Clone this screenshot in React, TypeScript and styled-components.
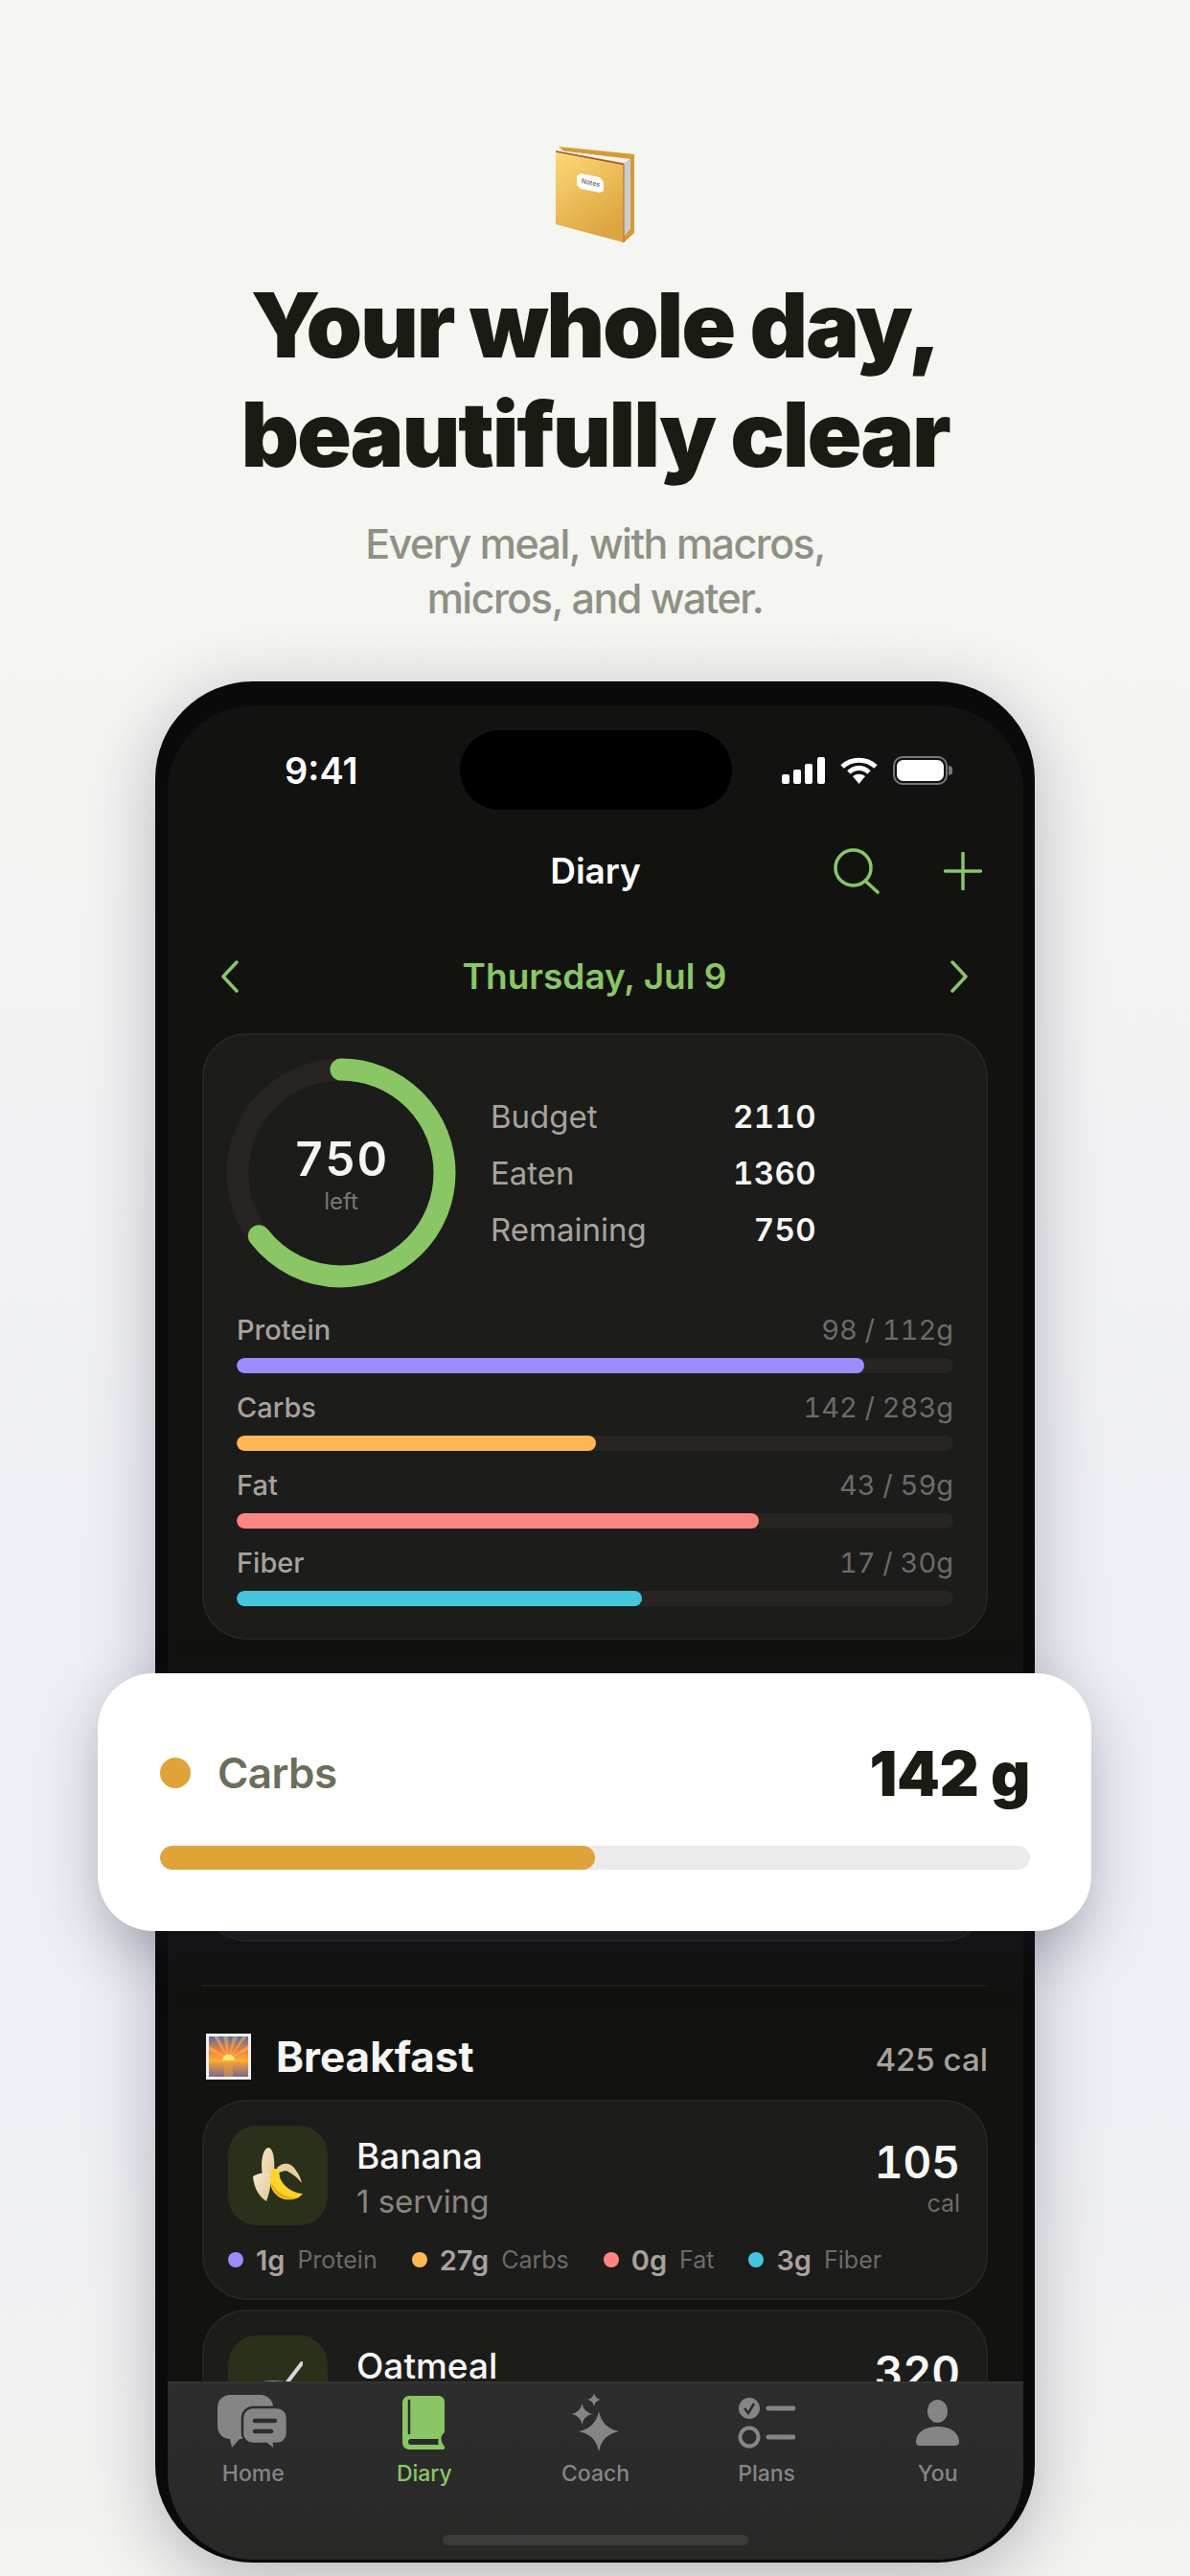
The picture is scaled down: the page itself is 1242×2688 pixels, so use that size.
import styled, { createGlobalStyle } from 'styled-components';

const GlobalStyle = createGlobalStyle`
  html, body {
    margin: 0;
    padding: 0;
  }
  body {
    width: 1242px;
    font-family: Inter, "Liberation Sans", sans-serif;
    -webkit-font-smoothing: antialiased;
  }
`;

const GREEN = '#8ac665';
const TAB_GRAY = '#858585';

const Page = styled.div`
  width: 1242px;
  height: 2688px;
  padding-top: 152px;
  box-sizing: border-box;
  overflow: hidden;
  display: flex;
  flex-direction: column;
  align-items: center;
  background: linear-gradient(180deg, #f5f5f1 0%, #f5f5f1 22%, #eeeff5 62%, #eeeff4 82%, #f3f3ef 100%);
`;

const HeroIcon = styled.svg`
  display: block;
  width: 83px;
  height: 102px;
`;

const Title = styled.h1`
  margin: 29px 0 0;
  font-size: 94px;
  line-height: 113.5px;
  font-weight: 900;
  letter-spacing: -2.2px;
  color: #1a1b12;
  text-align: center;
`;

const Subtitle = styled.p`
  margin: 29px 0 0;
  font-size: 43px;
  line-height: 57px;
  font-weight: 500;
  letter-spacing: -1.5px;
  color: #8e9084;
  text-align: center;
`;

const Phone = styled.div`
  position: relative;
  flex: none;
  margin-top: 58px;
  width: 918px;
  height: 1963px;
  padding: 25px 12px 3px 13px;
  box-sizing: border-box;
  background: #0a0a0a;
  border-radius: 102px;
  box-shadow: 0 16px 70px rgba(40, 42, 70, 0.3);
`;

const Screen = styled.div`
  position: relative;
  height: 100%;
  overflow: hidden;
  border-radius: 90px;
  background: #121210;
  color: #f5f5f2;
`;

const StatusBar = styled.div`
  display: grid;
  grid-template-columns: 1fr 284px 1fr;
  align-items: center;
  height: 83px;
  padding-top: 26px;
`;

const Time = styled.div`
  padding-left: 122px;
  font-size: 38px;
  line-height: 46px;
  font-weight: 600;
  color: #fff;
`;

const Island = styled.div`
  height: 83px;
  border-radius: 42px;
  background: #000;
`;

const StatusIcons = styled.div`
  display: flex;
  align-items: center;
  gap: 16px;
  padding-left: 52px;
`;

const NavRow = styled.div`
  display: grid;
  grid-template-columns: 1fr auto 1fr;
  align-items: center;
  height: 80px;
  margin-top: 24px;
`;

const NavTitle = styled.div`
  font-size: 37px;
  line-height: 46px;
  font-weight: 600;
  color: #fff;
`;

const NavActions = styled.div`
  display: flex;
  align-items: center;
  justify-content: flex-end;
  gap: 67px;
  padding-right: 43px;
`;

const DateRow = styled.div`
  display: flex;
  align-items: center;
  justify-content: space-between;
  height: 60px;
  margin-top: 40px;
  padding: 0 58px 0 56px;
`;

const DateLabel = styled.div`
  font-size: 37px;
  line-height: 44px;
  font-weight: 600;
  color: ${GREEN};
`;

const Surface = styled.div`
  box-sizing: border-box;
  margin: 0 37px 0 36px;
  background: #1c1c1b;
  border: 2px solid #242423;
  border-radius: 46px;
`;

const SummaryCard = styled(Surface)`
  margin-top: 29px;
  height: 633px;
  padding: 24px 34px 0;
`;

const TopRow = styled.div`
  display: flex;
  align-items: center;
  gap: 36px;
  margin-left: -11px;
`;

const Ring = styled.div`
  display: grid;
  place-items: center;
  width: 240px;
  height: 240px;
  flex: none;

  & > * {
    grid-area: 1 / 1;
  }
`;

const RingCenter = styled.div`
  padding-top: 3px;
  display: flex;
  flex-direction: column;
  align-items: center;
  gap: 4px;
`;

const RingValue = styled.div`
  font-size: 49px;
  line-height: 52px;
  font-weight: 600;
  letter-spacing: 1.2px;
  font-variant-numeric: tabular-nums;
  color: #f5f5f2;
`;

const RingLabel = styled.div`
  font-size: 24px;
  line-height: 28px;
  color: #7a7672;
`;

const Stats = styled.div`
  display: grid;
  grid-template-columns: 1fr auto;
  grid-auto-rows: 59px;
  align-items: center;
  width: 340px;
`;

const StatLabel = styled.div`
  font-size: 33px;
  color: #a8a29c;
`;

const StatValue = styled.div`
  font-size: 33px;
  font-weight: 600;
  letter-spacing: 0.4px;
  font-variant-numeric: tabular-nums;
  color: #f7f7f5;
  text-align: right;
`;

const MacroList = styled.div`
  margin-top: 26px;
  display: flex;
  flex-direction: column;
  gap: 18.5px;
`;

const MacroHead = styled.div`
  display: flex;
  justify-content: space-between;
  align-items: center;
  height: 34px;
  margin-bottom: 12.5px;
`;

const MacroName = styled.span`
  font-size: 29px;
  font-weight: 500;
  color: #a8a29c;
`;

const MacroAmount = styled.span`
  font-size: 29px;
  font-variant-numeric: tabular-nums;
  color: #6e6a66;
`;

const Track = styled.div`
  height: 16px;
  border-radius: 8px;
  background: #272422;
  overflow: hidden;
`;

const Fill = styled.div<{ $color: string }>`
  height: 100%;
  border-radius: 8px;
  background: ${(p) => p.$color};
`;

const WaterCard = styled(Surface)`
  margin-top: 40px;
  height: 275px;
`;

const Divider = styled.div`
  height: 2px;
  margin: 45px 37px 0 36px;
  background: #1e1e1c;
`;

const MealHeader = styled.div`
  display: flex;
  align-items: center;
  justify-content: space-between;
  height: 52px;
  margin: 47px 37px 0 40px;
`;

const MealTitle = styled.div`
  display: flex;
  align-items: center;
  gap: 26px;
  font-size: 44px;
  font-weight: 700;
  color: #f5f5f2;
`;

const MealCalories = styled.div`
  padding-top: 5px;
  font-size: 33px;
  font-weight: 500;
  color: #a8a29c;
`;

const FoodCard = styled(Surface)`
  padding: 25px 27px 0 25px;
  height: 209px;
  margin-top: 19px;

  & + & {
    margin-top: 10px;
  }
`;

const FoodTop = styled.div`
  display: flex;
  align-items: flex-start;
`;

const Tile = styled.div`
  flex: none;
  width: 104px;
  height: 104px;
  border-radius: 30px;
  background: #2a3019;
  display: flex;
  align-items: center;
  justify-content: center;
  margin-right: 30px;
`;

const FoodText = styled.div`
  flex: 1;
  padding-top: 10px;
`;

const FoodName = styled.div`
  font-size: 37px;
  line-height: 44px;
  font-weight: 500;
  color: #f7f7f5;
`;

const FoodServing = styled.div`
  margin-top: 3px;
  font-size: 33px;
  line-height: 44px;
  color: #8a8580;
`;

const FoodCalories = styled.div`
  padding-top: 12px;
  text-align: right;
`;

const CalorieValue = styled.div`
  font-size: 46px;
  line-height: 52px;
  font-weight: 600;
  font-variant-numeric: tabular-nums;
  color: #f7f7f5;
`;

const CalorieUnit = styled.div`
  margin-top: 2px;
  font-size: 25px;
  line-height: 30px;
  color: #6e6a66;
`;

const NutrientRow = styled.div`
  display: flex;
  align-items: center;
  gap: 36px;
  height: 34px;
  margin-top: 19px;
`;

const Nutrient = styled.div`
  display: flex;
  align-items: center;
`;

const Dot = styled.span<{ $color: string }>`
  width: 16px;
  height: 16px;
  border-radius: 50%;
  background: ${(p) => p.$color};
  margin-right: 13px;
`;

const NutrientValue = styled.span`
  font-size: 29px;
  font-weight: 600;
  color: #a8a29c;
  margin-right: 13px;
`;

const NutrientName = styled.span`
  font-size: 25px;
  color: #6e6a66;
`;

const TabBar = styled.div`
  position: absolute;
  left: 0;
  right: 0;
  bottom: 0;
  height: 186px;
  box-sizing: border-box;
  display: flex;
  flex-direction: column;
  justify-content: space-between;
  padding: 11px 0 15px;
  background: linear-gradient(180deg, #2c2d2c 0%, #282827 100%);
  border-top: 2px solid #333432;
`;

const Tabs = styled.div`
  display: grid;
  grid-template-columns: repeat(5, 1fr);
`;

const Tab = styled.div<{ $active?: boolean }>`
  display: flex;
  flex-direction: column;
  align-items: center;
  color: ${(p) => (p.$active ? GREEN : TAB_GRAY)};
`;

const TabIcon = styled.div`
  display: flex;
  align-items: center;
  justify-content: center;
  height: 60px;
`;

const TabLabel = styled.div`
  margin-top: 9px;
  font-size: 23px;
  line-height: 28px;
  font-weight: 500;
`;

const HomeIndicator = styled.div`
  align-self: center;
  width: 319px;
  height: 11px;
  border-radius: 6px;
  background: #3b3b3a;
`;

const FloatCard = styled.div`
  position: absolute;
  left: -60px;
  top: 1035px;
  width: 1037px;
  height: 269px;
  box-sizing: border-box;
  padding: 66px 64px 0 65px;
  background: #fff;
  border-radius: 58px;
  box-shadow: 0 22px 60px rgba(30, 32, 60, 0.28);
`;

const FloatHead = styled.div`
  display: flex;
  align-items: center;
  justify-content: space-between;
  height: 76px;
`;

const FloatLabel = styled.div`
  display: flex;
  align-items: center;
  gap: 28px;
  font-size: 44px;
  font-weight: 600;
  letter-spacing: -0.6px;
  color: #6b6e5c;
`;

const FloatDot = styled.span`
  width: 32px;
  height: 32px;
  border-radius: 50%;
  background: #e0a33a;
`;

const FloatValue = styled.div`
  font-size: 64px;
  font-weight: 900;
  letter-spacing: -0.4px;
  color: #1a1b12;
`;

const FloatTrack = styled.div`
  margin-top: 38px;
  height: 25px;
  border-radius: 13px;
  background: #ebebeb;
  overflow: hidden;
`;

const FloatFill = styled.div`
  height: 100%;
  border-radius: 13px;
  background: #e0a33a;
`;

const macros = [
  { name: 'Protein', amount: '98 / 112g', pct: 87.5, color: '#9b8cff' },
  { name: 'Carbs', amount: '142 / 283g', pct: 50.1, color: '#ffb755' },
  { name: 'Fat', amount: '43 / 59g', pct: 72.9, color: '#ff8585' },
  { name: 'Fiber', amount: '17 / 30g', pct: 56.6, color: '#45c6dd' },
];

const bananaNutrients = [
  { value: '1g', name: 'Protein', color: '#9b8cff' },
  { value: '27g', name: 'Carbs', color: '#ffb755' },
  { value: '0g', name: 'Fat', color: '#ff8585' },
  { value: '3g', name: 'Fiber', color: '#45c6dd' },
];

const NotebookEmoji = () => (
  <HeroIcon viewBox="0 0 83 102">
    <defs>
      <linearGradient id="cover" x1="0" y1="0" x2="0.5" y2="1">
        <stop offset="0" stopColor="#fdd878" />
        <stop offset="1" stopColor="#dca53f" />
      </linearGradient>
    </defs>
    <path d="M3 1 L82 9 L82 91 L71 101 L60 50 Z" fill="#d79a35" />
    <path d="M3 5 L78 14 L78 87 L71 95 L71 18 Z" fill="#c9ccd0" />
    <path d="M3 5 L78 14 L71 18 L3 6 Z" fill="#f1f1ee" />
    <path d="M0 6 L71 20 L71 101 L0 82 Z" fill="url(#cover)" />
    <path d="M0 6 L71 19.5" stroke="#a8562a" strokeWidth="1.4" fill="none" />
    <path d="M71 20 V101" stroke="#b9762c" strokeWidth="1.2" />
    <path
      d="M26 29 L46 33 L50 38 L50 47 L46 49 L26 45 L22 41 L22 32 Z"
      fill="#fff"
    />
    <text
      x="36"
      y="41"
      fontSize="7"
      fontWeight="600"
      fill="#77777a"
      textAnchor="middle"
      transform="rotate(11 36 41)"
    >
      Notes
    </text>
  </HeroIcon>
);

const SunriseEmoji = () => (
  <svg width="47" height="48" viewBox="0 0 47 48">
    <defs>
      <linearGradient id="sky" x1="0" y1="0" x2="0" y2="1">
        <stop offset="0" stopColor="#5f6a9c" />
        <stop offset="0.35" stopColor="#f0803c" />
        <stop offset="0.62" stopColor="#fbb034" />
        <stop offset="0.66" stopColor="#ea9a3c" />
        <stop offset="1" stopColor="#7c6a8c" />
      </linearGradient>
    </defs>
    <rect width="47" height="48" fill="#eef0f4" />
    <rect x="3" y="3" width="41" height="42" fill="url(#sky)" />
    <path
      d="M23.5 27 L8 3 H13 Z M23.5 27 L18 3 H23 Z M23.5 27 L28 3 H33 Z M23.5 27 L38 3 H43 Z M23.5 27 L3 12 V17 Z M23.5 27 L44 12 V17 Z"
      fill="#ffd25e"
      opacity="0.4"
    />
    <path d="M17 28 A6.5 6.5 0 0 1 30 28 Z" fill="#ffe873" />
    <rect x="19" y="29" width="9" height="16" fill="#f2a33c" opacity="0.45" />
  </svg>
);

const BananaEmoji = () => (
  <svg width="52" height="58" viewBox="0 0 52 58">
    <defs>
      <linearGradient id="peel" x1="0" y1="0" x2="1" y2="1">
        <stop offset="0" stopColor="#f6e8ce" />
        <stop offset="1" stopColor="#e2c996" />
      </linearGradient>
    </defs>
    <path d="M16 0 C22 1 23 14 22 30 L10 30 C8 18 9 2 16 0 Z" fill="url(#peel)" />
    <path d="M0 30 C6 26 12 26 18 27 C20 36 17 48 14 56 C6 51 1 42 0 30 Z" fill="url(#peel)" />
    <path d="M25 21 C32 14 41 16 45 24 C48 28 50 32 51 37 C45 30 40 26 34 24 L27 26 Z" fill="#e7cf9f" />
    <path d="M21 22 C16 30 16 45 28 52 C35 56 47 55 52 48 C44 48 32 42 28 31 L27 22 Z" fill="#fdd42a" />
    <path d="M19 36 C20 44 24 49 31 52 C36 54 42 54 47 52 C38 53 26 50 19 36 Z" fill="#e8a80f" />
  </svg>
);

const OatmealEmoji = () => (
  <svg width="52" height="58" viewBox="0 0 52 58">
    <path d="M51 6 L35 27" stroke="#d9d5d8" strokeWidth="4" strokeLinecap="round" />
    <ellipse cx="22" cy="32" rx="22" ry="8" fill="#6d8fb0" />
    <path d="M0 32 C2 50 12 56 22 56 C32 56 42 50 44 32 Z" fill="#4c77a5" />
  </svg>
);

const HomeIcon = () => (
  <svg width="74" height="59" viewBox="0 0 74 59" fill={TAB_GRAY}>
    <path d="M13 0 H45 A13 13 0 0 1 58 13 V33 A13 13 0 0 1 45 46 H23 L15 55 L13 46 A13 13 0 0 1 0 33 V13 A13 13 0 0 1 13 0 Z" />
    <path
      d="M37 13 H62 A11 11 0 0 1 73 24 V40 A11 11 0 0 1 62 51 H59 L60 58 L51 51 H37 A11 11 0 0 1 26 40 V24 A11 11 0 0 1 37 13 Z"
      stroke="#2b2c2b"
      strokeWidth="2.5"
    />
    <path d="M39 27 H60 M39 38 H56" stroke="#2b2c2b" strokeWidth="4.5" strokeLinecap="round" fill="none" />
  </svg>
);

const DiaryIcon = () => (
  <svg width="45" height="56" viewBox="0 0 45 56">
    <path
      d="M7 0 H38 A6 6 0 0 1 44 6 V36 A4 4 0 0 1 42 40 C40 43 40 47 42 50 L44 53 A2 2 0 0 1 42 56 H7 A7 7 0 0 1 0 49 V7 A7 7 0 0 1 7 0 Z"
      fill={GREEN}
    />
    <path d="M7 5 V39" stroke="#2b2c2b" strokeWidth="2.5" strokeLinecap="round" />
    <path d="M9 45 H38 C37 47 37 49 38 51 H9 A3 3 0 0 1 9 45 Z" fill="#2b2c2b" />
  </svg>
);

const star = (cx: number, cy: number, rx: number, ry: number) =>
  `M${cx} ${cy - ry} Q${cx + rx * 0.16} ${cy - ry * 0.16} ${cx + rx} ${cy} Q${cx + rx * 0.16} ${cy + ry * 0.16} ${cx} ${cy + ry} Q${cx - rx * 0.16} ${cy + ry * 0.16} ${cx - rx} ${cy} Q${cx - rx * 0.16} ${cy - ry * 0.16} ${cx} ${cy - ry} Z`;

const CoachIcon = () => (
  <svg width="50" height="60" viewBox="0 0 50 60" fill={TAB_GRAY}>
    <path d={star(29, 39, 21, 21)} />
    <path d={star(11.5, 21, 11, 11)} />
    <path d={star(24, 6, 7, 7)} />
  </svg>
);

const PlansIcon = () => (
  <svg width="60" height="54" viewBox="0 0 60 54">
    <circle cx="12" cy="12" r="11" fill={TAB_GRAY} />
    <path d="M7 12 L11 17 L17 7" stroke="#2b2c2b" strokeWidth="2.5" fill="none" />
    <path d="M32 12 H58 M32 42 H58" stroke={TAB_GRAY} strokeWidth="5" strokeLinecap="round" />
    <circle cx="12" cy="42" r="9.5" fill="none" stroke={TAB_GRAY} strokeWidth="4" />
  </svg>
);

const YouIcon = () => (
  <svg width="45" height="48" viewBox="0 0 45 48" fill={TAB_GRAY}>
    <ellipse cx="22.5" cy="12" rx="10.5" ry="12" />
    <path d="M0 44 C0 34 10 28 22.5 28 C35 28 45 34 45 44 A4 4 0 0 1 41 48 H4 A4 4 0 0 1 0 44 Z" />
  </svg>
);

const tabs = [
  { label: 'Home', icon: <HomeIcon /> },
  { label: 'Diary', icon: <DiaryIcon />, active: true },
  { label: 'Coach', icon: <CoachIcon /> },
  { label: 'Plans', icon: <PlansIcon /> },
  { label: 'You', icon: <YouIcon /> },
];

export default function App() {
  const radius = 108;
  const circumference = 2 * Math.PI * radius;

  return (
    <Page>
      <GlobalStyle />
      <NotebookEmoji />
      <Title>
        Your whole day,
        <br />
        beautifully clear
      </Title>
      <Subtitle>
        Every meal, with macros,
        <br />
        micros, and water.
      </Subtitle>

      <Phone>
        <Screen>
          <StatusBar>
            <Time>9:41</Time>
            <Island />
            <StatusIcons>
              <svg width="45" height="28" viewBox="0 0 45 28" fill="#fff">
                <rect x="0" y="18" width="8" height="10" rx="2" />
                <rect x="12" y="13" width="8" height="15" rx="2" />
                <rect x="24" y="7" width="8" height="21" rx="2" />
                <rect x="37" y="0" width="8" height="28" rx="2" />
              </svg>
              <svg width="39" height="28" viewBox="0 0 39 28" fill="none" stroke="#fff">
                <path d="M2 10 C12 1 27 1 37 10" strokeWidth="5" />
                <path d="M9 16 C15 10 24 10 30 16" strokeWidth="5" />
                <path d="M19.5 28 L13 20 C17 17 22 17 26 20 Z" fill="#fff" stroke="none" />
              </svg>
              <svg width="62" height="30" viewBox="0 0 62 30">
                <rect x="1" y="1" width="55" height="28" rx="9" fill="none" stroke="#77777a" strokeWidth="2" />
                <rect x="4" y="4" width="49" height="22" rx="6.5" fill="#fff" />
                <path d="M58 10 A5 5 0 0 1 58 20 Z" fill="#77777a" />
              </svg>
            </StatusIcons>
          </StatusBar>

          <NavRow>
            <span />
            <NavTitle>Diary</NavTitle>
            <NavActions>
              <svg width="48" height="48" viewBox="0 0 48 48" fill="none" stroke={GREEN} strokeWidth="3.5" strokeLinecap="round">
                <circle cx="20.5" cy="20.5" r="18.5" />
                <path d="M33 34 L46 46" />
              </svg>
              <svg width="40" height="40" viewBox="0 0 40 40" fill="none" stroke={GREEN} strokeWidth="3.5" strokeLinecap="round">
                <path d="M20 1.5 V38.5 M1.5 20 H38.5" />
              </svg>
            </NavActions>
          </NavRow>

          <DateRow>
            <svg width="18" height="34" viewBox="0 0 18 34" fill="none" stroke={GREEN} strokeWidth="3.5" strokeLinecap="round" strokeLinejoin="round">
              <path d="M16 2 L2 17 L16 32" />
            </svg>
            <DateLabel>Thursday, Jul 9</DateLabel>
            <svg width="18" height="34" viewBox="0 0 18 34" fill="none" stroke={GREEN} strokeWidth="3.5" strokeLinecap="round" strokeLinejoin="round">
              <path d="M2 2 L16 17 L2 32" />
            </svg>
          </DateRow>

          <SummaryCard>
            <TopRow>
              <Ring>
                <svg width="240" height="240" viewBox="0 0 240 240" fill="none" strokeWidth="23">
                  <circle cx="120" cy="120" r={radius} stroke="#272422" />
                  <circle
                    cx="120"
                    cy="120"
                    r={radius}
                    stroke={GREEN}
                    strokeLinecap="round"
                    strokeDasharray={`${circumference * 0.645} ${circumference}`}
                    transform="rotate(-90 120 120)"
                  />
                </svg>
                <RingCenter>
                  <RingValue>750</RingValue>
                  <RingLabel>left</RingLabel>
                </RingCenter>
              </Ring>
              <Stats>
                <StatLabel>Budget</StatLabel>
                <StatValue>2110</StatValue>
                <StatLabel>Eaten</StatLabel>
                <StatValue>1360</StatValue>
                <StatLabel>Remaining</StatLabel>
                <StatValue>750</StatValue>
              </Stats>
            </TopRow>
            <MacroList>
              {macros.map((m) => (
                <div key={m.name}>
                  <MacroHead>
                    <MacroName>{m.name}</MacroName>
                    <MacroAmount>{m.amount}</MacroAmount>
                  </MacroHead>
                  <Track>
                    <Fill $color={m.color} style={{ width: `${m.pct}%` }} />
                  </Track>
                </div>
              ))}
            </MacroList>
          </SummaryCard>

          <WaterCard />
          <Divider />

          <MealHeader>
            <MealTitle>
              <SunriseEmoji />
              Breakfast
            </MealTitle>
            <MealCalories>425 cal</MealCalories>
          </MealHeader>

          <FoodCard>
            <FoodTop>
              <Tile>
                <BananaEmoji />
              </Tile>
              <FoodText>
                <FoodName>Banana</FoodName>
                <FoodServing>1 serving</FoodServing>
              </FoodText>
              <FoodCalories>
                <CalorieValue>105</CalorieValue>
                <CalorieUnit>cal</CalorieUnit>
              </FoodCalories>
            </FoodTop>
            <NutrientRow>
              {bananaNutrients.map((n) => (
                <Nutrient key={n.name}>
                  <Dot $color={n.color} />
                  <NutrientValue>{n.value}</NutrientValue>
                  <NutrientName>{n.name}</NutrientName>
                </Nutrient>
              ))}
            </NutrientRow>
          </FoodCard>

          <FoodCard>
            <FoodTop>
              <Tile>
                <OatmealEmoji />
              </Tile>
              <FoodText>
                <FoodName>Oatmeal</FoodName>
              </FoodText>
              <FoodCalories>
                <CalorieValue>320</CalorieValue>
              </FoodCalories>
            </FoodTop>
          </FoodCard>

          <TabBar>
            <Tabs>
              {tabs.map((t) => (
                <Tab key={t.label} $active={t.active}>
                  <TabIcon>{t.icon}</TabIcon>
                  <TabLabel>{t.label}</TabLabel>
                </Tab>
              ))}
            </Tabs>
            <HomeIndicator />
          </TabBar>
        </Screen>

        <FloatCard>
          <FloatHead>
            <FloatLabel>
              <FloatDot />
              Carbs
            </FloatLabel>
            <FloatValue>142 g</FloatValue>
          </FloatHead>
          <FloatTrack>
            <FloatFill style={{ width: '50%' }} />
          </FloatTrack>
        </FloatCard>
      </Phone>
    </Page>
  );
}
